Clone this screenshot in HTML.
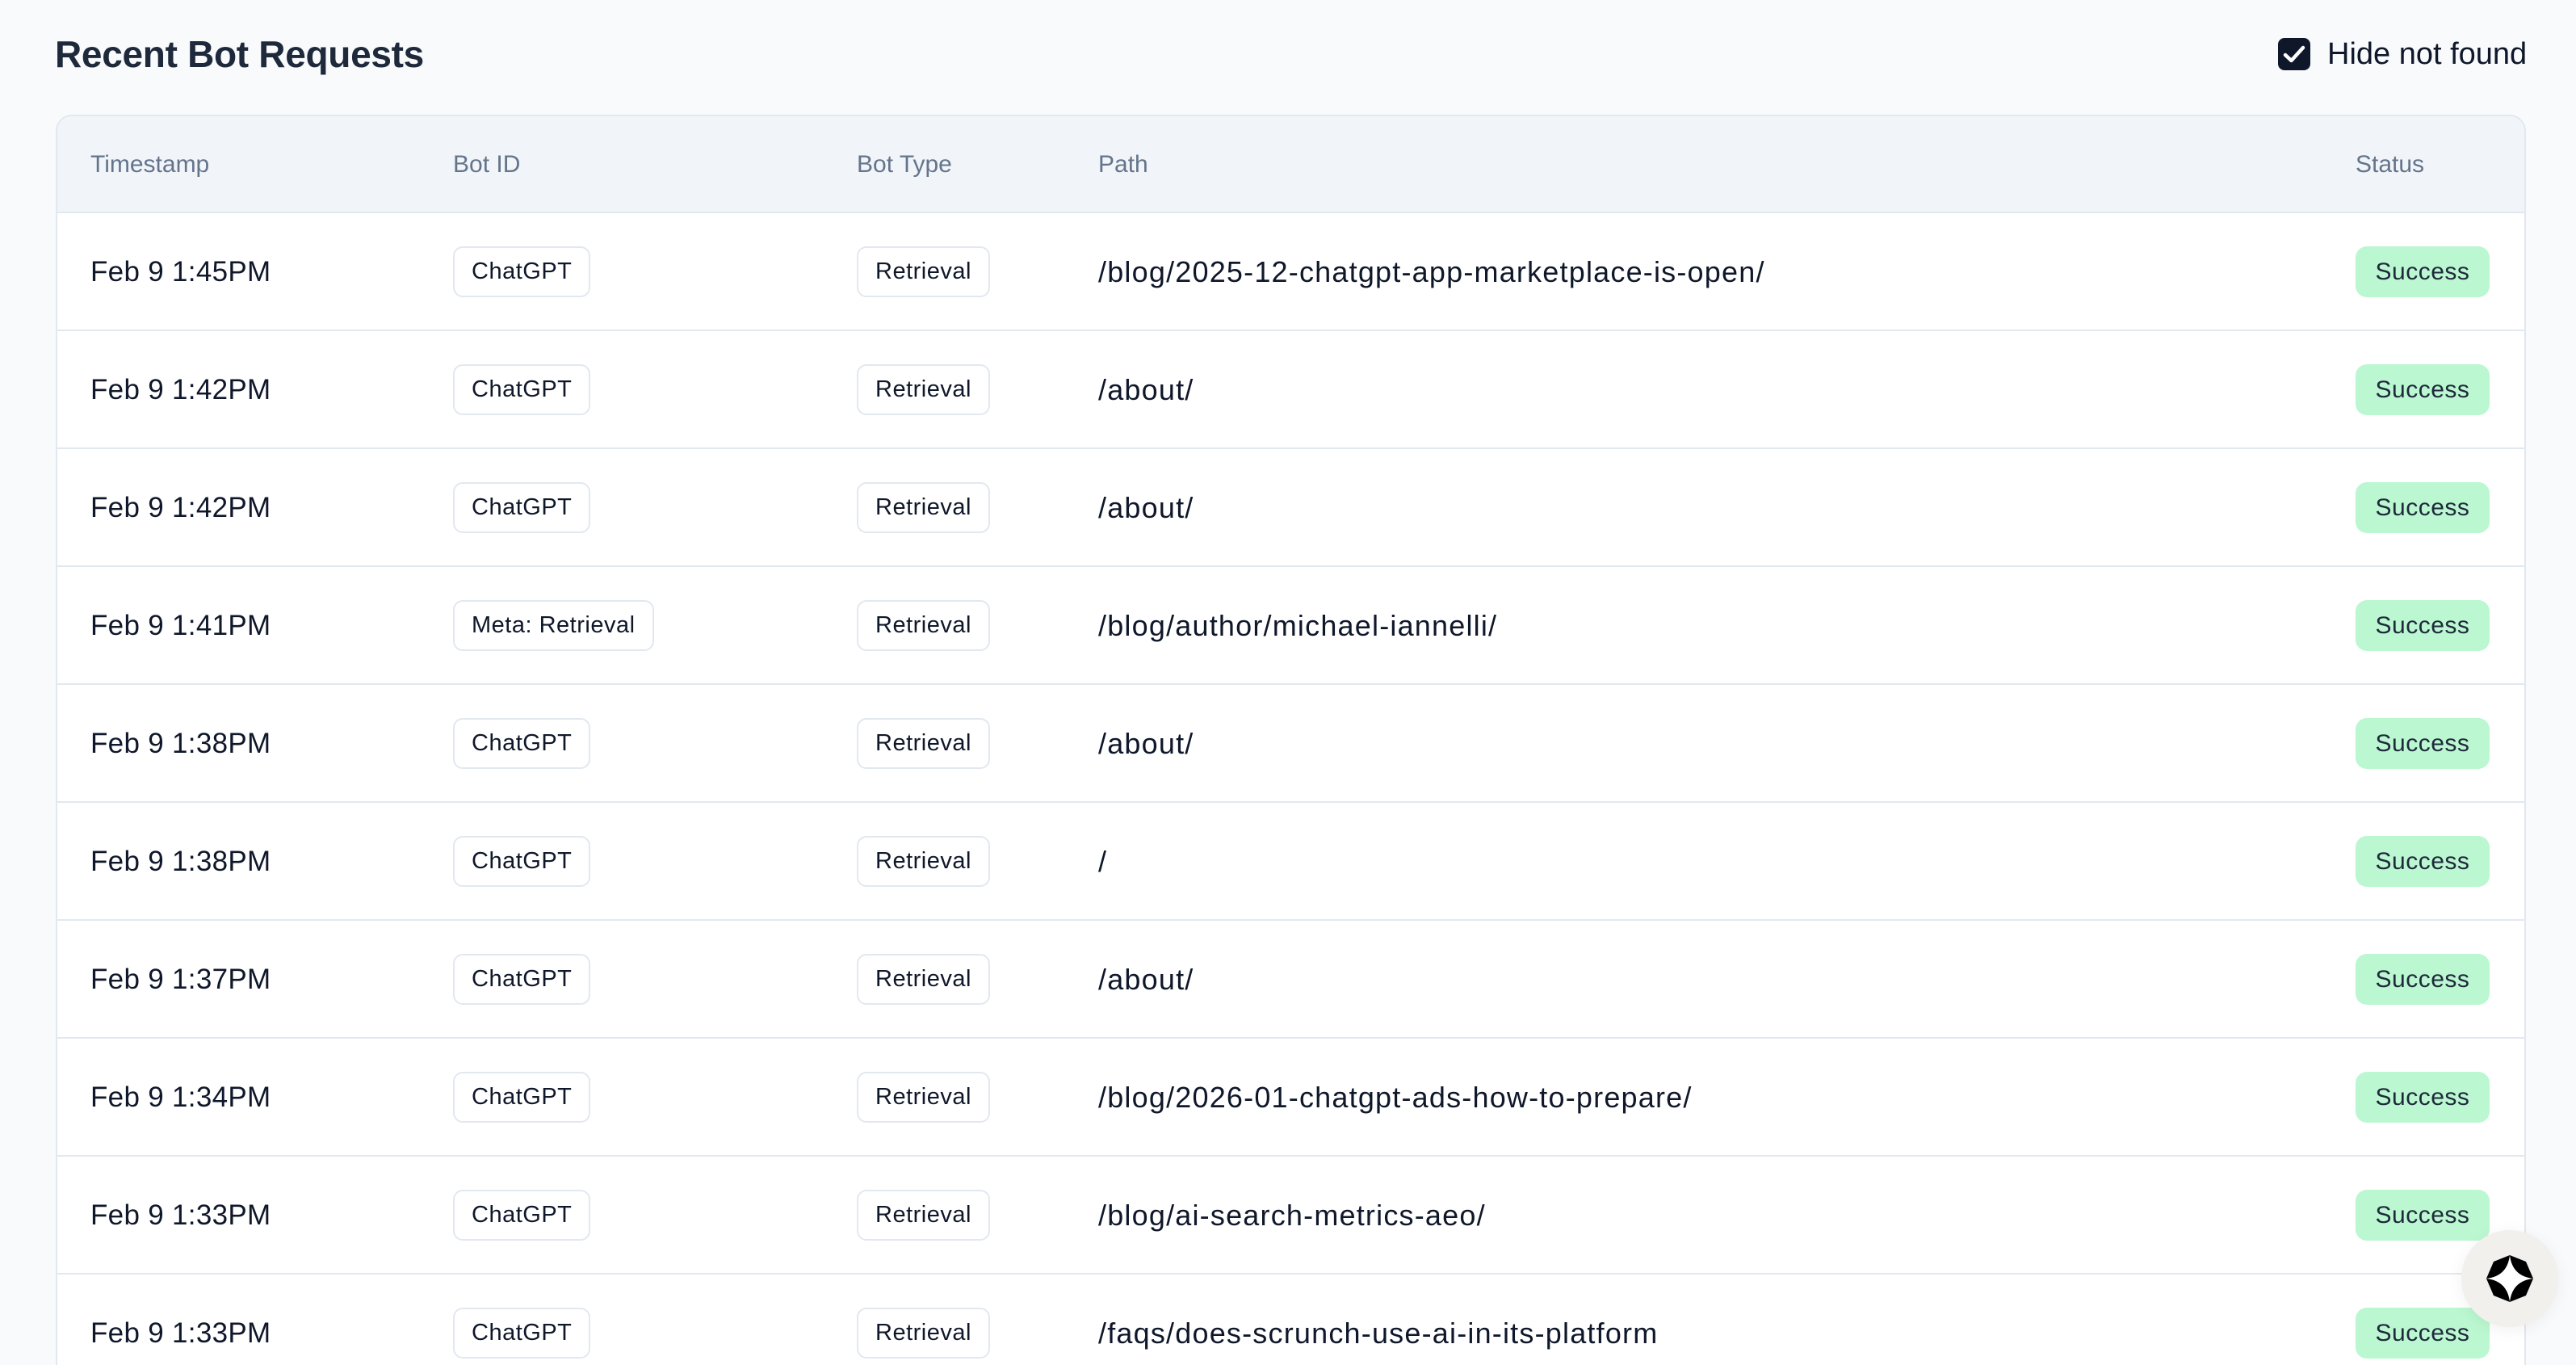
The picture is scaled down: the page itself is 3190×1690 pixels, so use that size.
<!DOCTYPE html>
<html><head><meta charset="utf-8"><style>
*{margin:0;padding:0;box-sizing:border-box}
html,body{width:3190px;height:1690px;overflow:hidden}
body{background:#f8fafc;font-family:"Liberation Sans",Arial,sans-serif;position:relative}
.title{position:absolute;left:68px;top:40px;font-size:46px;font-weight:600;color:#1e293b;letter-spacing:-0.3px}
.cb{position:absolute;left:2821px;top:47px;width:40px;height:40px;background:#0f172a;border-radius:8px}
.cbl{position:absolute;left:2882px;top:46px;font-size:38px;color:#0f172a}
.tbl{position:absolute;left:69px;top:142px;width:3059px;height:1600px;border:2px solid #e2e8f0;border-radius:20px;background:#fff;overflow:hidden}
.hd{position:absolute;left:0;top:0;width:100%;height:120px;background:#f1f5f9;border-bottom:2px solid #e2e8f0}
.hd span{position:absolute;top:43px;font-size:30px;color:#64748b}
.row{position:absolute;left:0;width:100%;height:146px;border-bottom:2px solid #e2e8f0}
.row .t{position:absolute;left:41px;top:53px;font-size:35px;color:#0f172a;letter-spacing:0.3px}
.row .p{position:absolute;left:1289px;top:52px;font-size:36px;color:#0f172a;letter-spacing:1.2px}
.pill{position:absolute;top:41px;height:63px;border:2px solid #e2e8f0;border-radius:12px;background:#fff;font-size:29px;color:#0f172a;line-height:59px;padding:0 21px;letter-spacing:0.5px}
.ok{position:absolute;left:2846px;top:41px;width:166px;height:63px;border-radius:14px;background:#bbf7d0;font-size:30px;color:#1e293b;line-height:63px;text-align:center;letter-spacing:0.5px}
.fab{position:absolute;left:3048px;top:1523px;width:120px;height:120px;border-radius:50%;background:#f1f0ec;box-shadow:0 4px 20px rgba(0,0,0,.06)}
</style></head><body>
<div class="title">Recent Bot Requests</div>
<div class="cb"><svg width="40" height="40" viewBox="0 0 40 40"><path d="M9 21 L16.5 28 L31 12" fill="none" stroke="#fff" stroke-width="4.5" stroke-linecap="round" stroke-linejoin="round"/></svg></div>
<div class="cbl">Hide not found</div>
<div class="tbl">
<div class="hd"><span style="left:41px">Timestamp</span><span style="left:490px">Bot ID</span><span style="left:990px">Bot Type</span><span style="left:1289px">Path</span><span style="left:2846px">Status</span></div>
<div class="row" style="top:120px"><span class="t">Feb 9 1:45PM</span><span class="pill" style="left:490px">ChatGPT</span><span class="pill" style="left:990px">Retrieval</span><span class="p">/blog/2025-12-chatgpt-app-marketplace-is-open/</span><span class="ok">Success</span></div>
<div class="row" style="top:266px"><span class="t">Feb 9 1:42PM</span><span class="pill" style="left:490px">ChatGPT</span><span class="pill" style="left:990px">Retrieval</span><span class="p">/about/</span><span class="ok">Success</span></div>
<div class="row" style="top:412px"><span class="t">Feb 9 1:42PM</span><span class="pill" style="left:490px">ChatGPT</span><span class="pill" style="left:990px">Retrieval</span><span class="p">/about/</span><span class="ok">Success</span></div>
<div class="row" style="top:558px"><span class="t">Feb 9 1:41PM</span><span class="pill" style="left:490px">Meta: Retrieval</span><span class="pill" style="left:990px">Retrieval</span><span class="p">/blog/author/michael-iannelli/</span><span class="ok">Success</span></div>
<div class="row" style="top:704px"><span class="t">Feb 9 1:38PM</span><span class="pill" style="left:490px">ChatGPT</span><span class="pill" style="left:990px">Retrieval</span><span class="p">/about/</span><span class="ok">Success</span></div>
<div class="row" style="top:850px"><span class="t">Feb 9 1:38PM</span><span class="pill" style="left:490px">ChatGPT</span><span class="pill" style="left:990px">Retrieval</span><span class="p">/</span><span class="ok">Success</span></div>
<div class="row" style="top:996px"><span class="t">Feb 9 1:37PM</span><span class="pill" style="left:490px">ChatGPT</span><span class="pill" style="left:990px">Retrieval</span><span class="p">/about/</span><span class="ok">Success</span></div>
<div class="row" style="top:1142px"><span class="t">Feb 9 1:34PM</span><span class="pill" style="left:490px">ChatGPT</span><span class="pill" style="left:990px">Retrieval</span><span class="p">/blog/2026-01-chatgpt-ads-how-to-prepare/</span><span class="ok">Success</span></div>
<div class="row" style="top:1288px"><span class="t">Feb 9 1:33PM</span><span class="pill" style="left:490px">ChatGPT</span><span class="pill" style="left:990px">Retrieval</span><span class="p">/blog/ai-search-metrics-aeo/</span><span class="ok">Success</span></div>
<div class="row" style="top:1434px"><span class="t">Feb 9 1:33PM</span><span class="pill" style="left:490px">ChatGPT</span><span class="pill" style="left:990px">Retrieval</span><span class="p">/faqs/does-scrunch-use-ai-in-its-platform</span><span class="ok">Success</span></div>
</div>
<div class="fab"><svg width="120" height="120" viewBox="0 0 120 120">
<polygon points="60,31 80,39 89,60 80,81 60,89 40,81 31,60 40,39" fill="#000"/>
<path d="M60 31 Q63 57 89 60 Q63 63 60 89 Q57 63 31 60 Q57 57 60 31Z" fill="#fff"/>
</svg></div>
</body></html>
